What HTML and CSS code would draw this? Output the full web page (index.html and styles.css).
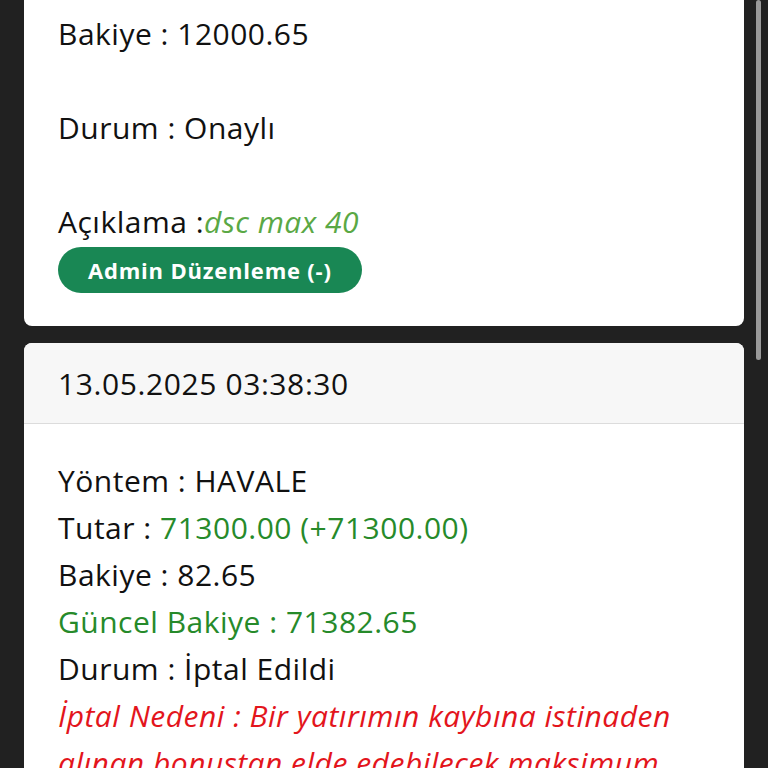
FILE: index.html
```html
<!DOCTYPE html>
<html lang="tr">

<head>
    <meta charset="UTF-8">
    <meta name="viewport" content="width=device-width, initial-scale=1.0">
    <title>İşlemler</title>
    <link rel="stylesheet" href="styles.css">
</head>

<body>
    <div class="scroll-thumb"></div>

    <main class="islemler">
        <div class="kart">
            <div class="kart-govde">
                <div class="satir bosluklu">Bakiye : 12000.65</div>
                <div class="satir bosluklu">Durum : Onaylı</div>
                <div class="satir">Açıklama :<span class="aciklama">dsc max 40</span></div>
                <button class="admin-btn">Admin Düzenleme (-)</button>
            </div>
        </div>

        <div class="kart">
            <div class="kart-baslik">13.05.2025 03:38:30</div>
            <div class="kart-govde">
                <div class="satir">Yöntem : HAVALE</div>
                <div class="satir">Tutar : <span class="yesil">71300.00 (+71300.00)</span></div>
                <div class="satir">Bakiye : 82.65</div>
                <div class="satir yesil">Güncel Bakiye : 71382.65</div>
                <div class="satir">Durum : İptal Edildi</div>
                <div class="satir iptal">İptal Nedeni : Bir yatırımın kaybına istinaden alınan bonustan elde edebilecek maksimum kazanç tutarı aşıldığı için işleminiz iptal edilmiştir.</div>
            </div>
        </div>
    </main>
</body>

</html>
```

FILE: styles.css
```css
html {
    box-sizing: border-box;
}

*,
*::before,
*::after {
    box-sizing: inherit;
}

body {
    margin: 0;
    padding: 0;
    height: 768px;
    overflow: hidden;
    background-color: #212121;
    font-family: "Open Sans", Lato, sans-serif;
    color: #111;
}

.scroll-thumb {
    position: fixed;
    top: 0;
    right: 7px;
    width: 5px;
    height: 360px;
    border-radius: 3px;
    background-color: #9a9a9a;
}

.islemler {
    display: flex;
    flex-direction: column;
    gap: 17px;
    padding: 0 24px;
    margin-top: -23px;
}

.kart {
    background-color: #fff;
    border-radius: 8px;
    overflow: hidden;
}

.kart-baslik {
    padding: 17px 34px 16px;
    background-color: #f7f7f7;
    border-bottom: 1px solid #dcdcdc;
    font-size: 30px;
    letter-spacing: 0.6px;
    line-height: 47px;
}

.kart-govde {
    padding: 33px 34px 33px;
}

.satir {
    font-size: 30px;
    letter-spacing: 0.5px;
    line-height: 47px;
}

.bosluklu {
    margin-bottom: 47px;
}

.aciklama {
    color: #5aa845;
    font-style: italic;
}

.yesil {
    color: #268a2a;
}

.iptal {
    color: #e3151c;
    font-style: italic;
}

.admin-btn {
    display: block;
    margin-top: 2px;
    padding: 0 30px;
    height: 46px;
    border: none;
    border-radius: 23px;
    background-color: #198754;
    color: #fff;
    font-family: "Open Sans", sans-serif;
    font-weight: 700;
    font-size: 22px;
    letter-spacing: 0.8px;
}
```
